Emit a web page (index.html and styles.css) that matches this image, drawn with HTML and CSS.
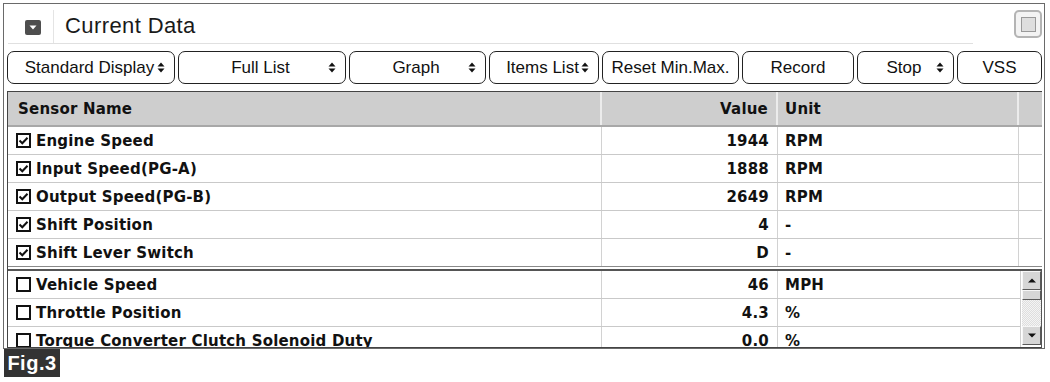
FILE: index.html
```html
<!DOCTYPE html>
<html>
<head>
    <meta charset="utf-8" />
    <title>Current Data</title>
    <link rel="stylesheet" href="styles.css">
</head>
<body>
<!-- Window -->
<section class="window">
    <div class="titlebar">
        <div class="title-main">
            <div class="collapse-cell">
                <svg class="collapse-icon" width="16" height="15" viewBox="0 0 16 15"><rect width="16" height="15" rx="2" fill="#4e4e4e"/><polygon points="4.5,5.5 11.5,5.5 8,9.5" fill="#fff"/></svg>
            </div>
            <h1>Current Data</h1>
        </div>
        <span class="max-btn"><span></span></span>
    </div>

    <!-- Toolbar -->
    <div class="toolbar">
        <button class="btn select b-display"><span class="label">Standard Display</span><svg width="8" height="11" viewBox="0 0 8 11"><polygon points="0.5,4.5 4,0.5 7.5,4.5"/><polygon points="0.5,6.5 4,10.5 7.5,6.5"/></svg></button>
        <button class="btn select b-list"><span class="label">Full List</span><svg width="8" height="11" viewBox="0 0 8 11"><polygon points="0.5,4.5 4,0.5 7.5,4.5"/><polygon points="0.5,6.5 4,10.5 7.5,6.5"/></svg></button>
        <button class="btn select b-graph"><span class="label">Graph</span><svg width="8" height="11" viewBox="0 0 8 11"><polygon points="0.5,4.5 4,0.5 7.5,4.5"/><polygon points="0.5,6.5 4,10.5 7.5,6.5"/></svg></button>
        <button class="btn select b-items"><span class="label">Items List</span><svg width="8" height="11" viewBox="0 0 8 11"><polygon points="0.5,4.5 4,0.5 7.5,4.5"/><polygon points="0.5,6.5 4,10.5 7.5,6.5"/></svg></button>
        <button class="btn b-reset">Reset Min.Max.</button>
        <button class="btn b-record">Record</button>
        <button class="btn select b-stop"><span class="label">Stop</span><svg width="8" height="11" viewBox="0 0 8 11"><polygon points="0.5,4.5 4,0.5 7.5,4.5"/><polygon points="0.5,6.5 4,10.5 7.5,6.5"/></svg></button>
        <button class="btn b-vss">VSS</button>
    </div>

    <!-- Data grid -->
    <div class="grid">
        <div class="row head">
            <div class="cell name">Sensor Name</div>
            <div class="cell value">Value</div>
            <div class="cell unit">Unit</div>
            <div class="cell"></div>
        </div>

        <div class="fixed">
            <div class="row">
                <div class="cell name"><svg class="check" width="15" height="15" viewBox="0 0 15 15"><rect x="1" y="1" width="13" height="13"/><path d="M3.5 7.5 L6.3 10.3 L11.5 4.8"/></svg>Engine Speed</div>
                <div class="cell value">1944</div>
                <div class="cell unit">RPM</div>
                <div class="cell"></div>
            </div>
            <div class="row">
                <div class="cell name"><svg class="check" width="15" height="15" viewBox="0 0 15 15"><rect x="1" y="1" width="13" height="13"/><path d="M3.5 7.5 L6.3 10.3 L11.5 4.8"/></svg>Input Speed(PG-A)</div>
                <div class="cell value">1888</div>
                <div class="cell unit">RPM</div>
                <div class="cell"></div>
            </div>
            <div class="row">
                <div class="cell name"><svg class="check" width="15" height="15" viewBox="0 0 15 15"><rect x="1" y="1" width="13" height="13"/><path d="M3.5 7.5 L6.3 10.3 L11.5 4.8"/></svg>Output Speed(PG-B)</div>
                <div class="cell value">2649</div>
                <div class="cell unit">RPM</div>
                <div class="cell"></div>
            </div>
            <div class="row">
                <div class="cell name"><svg class="check" width="15" height="15" viewBox="0 0 15 15"><rect x="1" y="1" width="13" height="13"/><path d="M3.5 7.5 L6.3 10.3 L11.5 4.8"/></svg>Shift Position</div>
                <div class="cell value">4</div>
                <div class="cell unit">-</div>
                <div class="cell"></div>
            </div>
            <div class="row">
                <div class="cell name"><svg class="check" width="15" height="15" viewBox="0 0 15 15"><rect x="1" y="1" width="13" height="13"/><path d="M3.5 7.5 L6.3 10.3 L11.5 4.8"/></svg>Shift Lever Switch</div>
                <div class="cell value">D</div>
                <div class="cell unit">-</div>
                <div class="cell"></div>
            </div>
        </div>

        <div class="scroll">
            <div class="scroll-rows">
                <div class="row">
                    <div class="cell name"><svg class="check" width="15" height="15" viewBox="0 0 15 15"><rect x="1" y="1" width="13" height="13"/></svg>Vehicle Speed</div>
                    <div class="cell value">46</div>
                    <div class="cell unit">MPH</div>
                </div>
                <div class="row">
                    <div class="cell name"><svg class="check" width="15" height="15" viewBox="0 0 15 15"><rect x="1" y="1" width="13" height="13"/></svg>Throttle Position</div>
                    <div class="cell value">4.3</div>
                    <div class="cell unit">%</div>
                </div>
                <div class="row">
                    <div class="cell name"><svg class="check" width="15" height="15" viewBox="0 0 15 15"><rect x="1" y="1" width="13" height="13"/></svg>Torque Converter Clutch Solenoid Duty</div>
                    <div class="cell value">0.0</div>
                    <div class="cell unit">%</div>
                </div>
            </div>
            <div class="scrollbar">
                <div class="sb-btn"><svg width="8" height="5" viewBox="0 0 8 5"><polygon points="0,4.5 4,0.5 8,4.5"/></svg></div>
                <div class="sb-thumb"></div>
                <div class="sb-track"></div>
                <div class="sb-btn"><svg width="8" height="5" viewBox="0 0 8 5"><polygon points="0,0.5 4,4.5 8,0.5"/></svg></div>
            </div>
        </div>
    </div>
</section>

<div class="fig">Fig.3</div>
</body>
</html>
```

FILE: styles.css
```css
body {
    margin: 0;
    background: #fff;
    color: #111;
    font-family: "Liberation Sans", Arial, sans-serif;
}
.window {
    width: 1040px;
    margin: 3px 0 0 3px;
    border: 1px solid #6a6a6a;
}

/* title bar */
.titlebar {
    display: flex;
    align-items: flex-start;
    padding: 0 2px 0 4px;
}
.title-main {
    flex: 1;
    display: flex;
    height: 39px;
    border-bottom: 1px solid #e0e0e0;
}
.collapse-cell {
    display: flex;
    align-items: center;
    justify-content: center;
    box-sizing: border-box;
    width: 46px;
    margin-top: 6px;
    padding: 2px 0 0 5px;
    border-right: 1px solid #e4e4e4;
}
.title-main h1 {
    margin: 0 0 0 11px;
    align-self: center;
    padding-top: 4px;
    font-size: 22px;
    font-weight: normal;
    letter-spacing: 0.4px;
    color: #1a1a1a;
}
.max-btn {
    display: flex;
    align-items: center;
    justify-content: center;
    box-sizing: border-box;
    width: 28px;
    height: 28px;
    margin: 6px 0 0 41px;
    border: 2px solid #b4b4b4;
    border-radius: 5px;
    background: #f3f3f3;
}
.max-btn span {
    width: 13px;
    height: 13px;
    border: 1px solid #999;
    background: #dedede;
}

/* toolbar */
.toolbar {
    display: flex;
    gap: 3px;
    margin: 7px 2px 0 3px;
}
.btn {
    display: flex;
    align-items: center;
    justify-content: center;
    box-sizing: border-box;
    height: 33px;
    padding: 0;
    border: 1px solid #222;
    border-radius: 7px;
    background: #fff;
    color: #111;
    font-family: "Liberation Sans", Arial, sans-serif;
    font-size: 17px;
    white-space: nowrap;
}
.btn.select {
    justify-content: flex-start;
    padding-left: 16px;
}
.btn .label {
    flex: 1;
    text-align: center;
}
.btn svg {
    flex: none;
    margin: 0 9px 0 2px;
    fill: #111;
}
.b-display { width: 168px; }
.b-list { width: 168px; }
.b-graph { width: 137px; }
.b-items { width: 110px; }
.b-reset { width: 137px; }
.b-record { width: 112px; }
.b-stop { width: 97px; }
.b-vss { width: 85px; }

/* grid */
.grid {
    margin: 7px 2px 0 3px;
    border-left: 1px solid #444;
    border-top: 1px solid #444;
    font-family: "DejaVu Sans", sans-serif;
    font-weight: bold;
    font-size: 15px;
    letter-spacing: 0.2px;
}
.row {
    display: grid;
    grid-template-columns: 594px 176px 241px 1fr;
    box-sizing: border-box;
    height: 28px;
    border-bottom: 1px solid #c9c9c9;
}
.cell {
    display: flex;
    align-items: center;
    box-sizing: border-box;
    border-right: 1px solid #d2d2d2;
    white-space: nowrap;
}
.cell.name {
    padding-left: 8px;
}
.cell.value {
    justify-content: flex-end;
    padding-right: 8px;
}
.cell.unit {
    padding-left: 7px;
}
.row.head {
    height: 35px;
    background: #cecece;
    border-bottom: 2px solid #a8a8a8;
}
.row.head .cell {
    border-right: 2px solid #ececec;
}
.row.head .cell.name {
    padding-left: 10px;
}
.row.head .cell:last-child {
    border-right: none;
}
.check {
    flex: none;
    margin-right: 5px;
    fill: #fff;
    stroke: #111;
    stroke-width: 2;
}
.check path {
    fill: none;
}
.fixed {
    border-bottom: 1px solid #8a8a8a;
}
.fixed .row:last-child {
    border-bottom: none;
    height: 27px;
}
.fixed .cell:last-child {
    border-right: none;
}

/* scrolling part */
.scroll {
    display: flex;
    box-sizing: border-box;
    height: 79px;
    margin-top: 2px;
    border-top: 2px solid #555;
    border-bottom: 1px solid #444;
    border-right: 1px solid #555;
}
.scroll-rows {
    flex: 1;
    overflow: hidden;
}
.scroll-rows .row {
    grid-template-columns: 594px 176px 241px;
}
.scroll-rows .cell.unit {
    border-right: none;
}
.scrollbar {
    display: flex;
    flex-direction: column;
    box-sizing: border-box;
    width: 21px;
    padding: 0 0 2px 1px;
    border-left: 1px solid #cfcfcf;
}
.sb-btn,
.sb-thumb {
    display: flex;
    align-items: center;
    justify-content: center;
    box-sizing: border-box;
    height: 19px;
    background: #d6d6d6;
    border: 1px solid;
    border-color: #f6f6f6 #5a5a5a #5a5a5a #f6f6f6;
}
.sb-thumb {
    height: 10px;
}
.sb-track {
    flex: 1;
    background: repeating-conic-gradient(#dedede 0 25%, #f4f4f4 0 50%) 0 0 / 2px 2px;
}
.sb-btn svg {
    fill: #111;
}

/* figure label */
.fig {
    display: flex;
    align-items: center;
    justify-content: center;
    width: 56px;
    height: 28px;
    margin-left: 4px;
    background: #333;
    color: #fff;
    font-size: 20px;
    font-weight: bold;
    letter-spacing: 0.5px;
}
```
